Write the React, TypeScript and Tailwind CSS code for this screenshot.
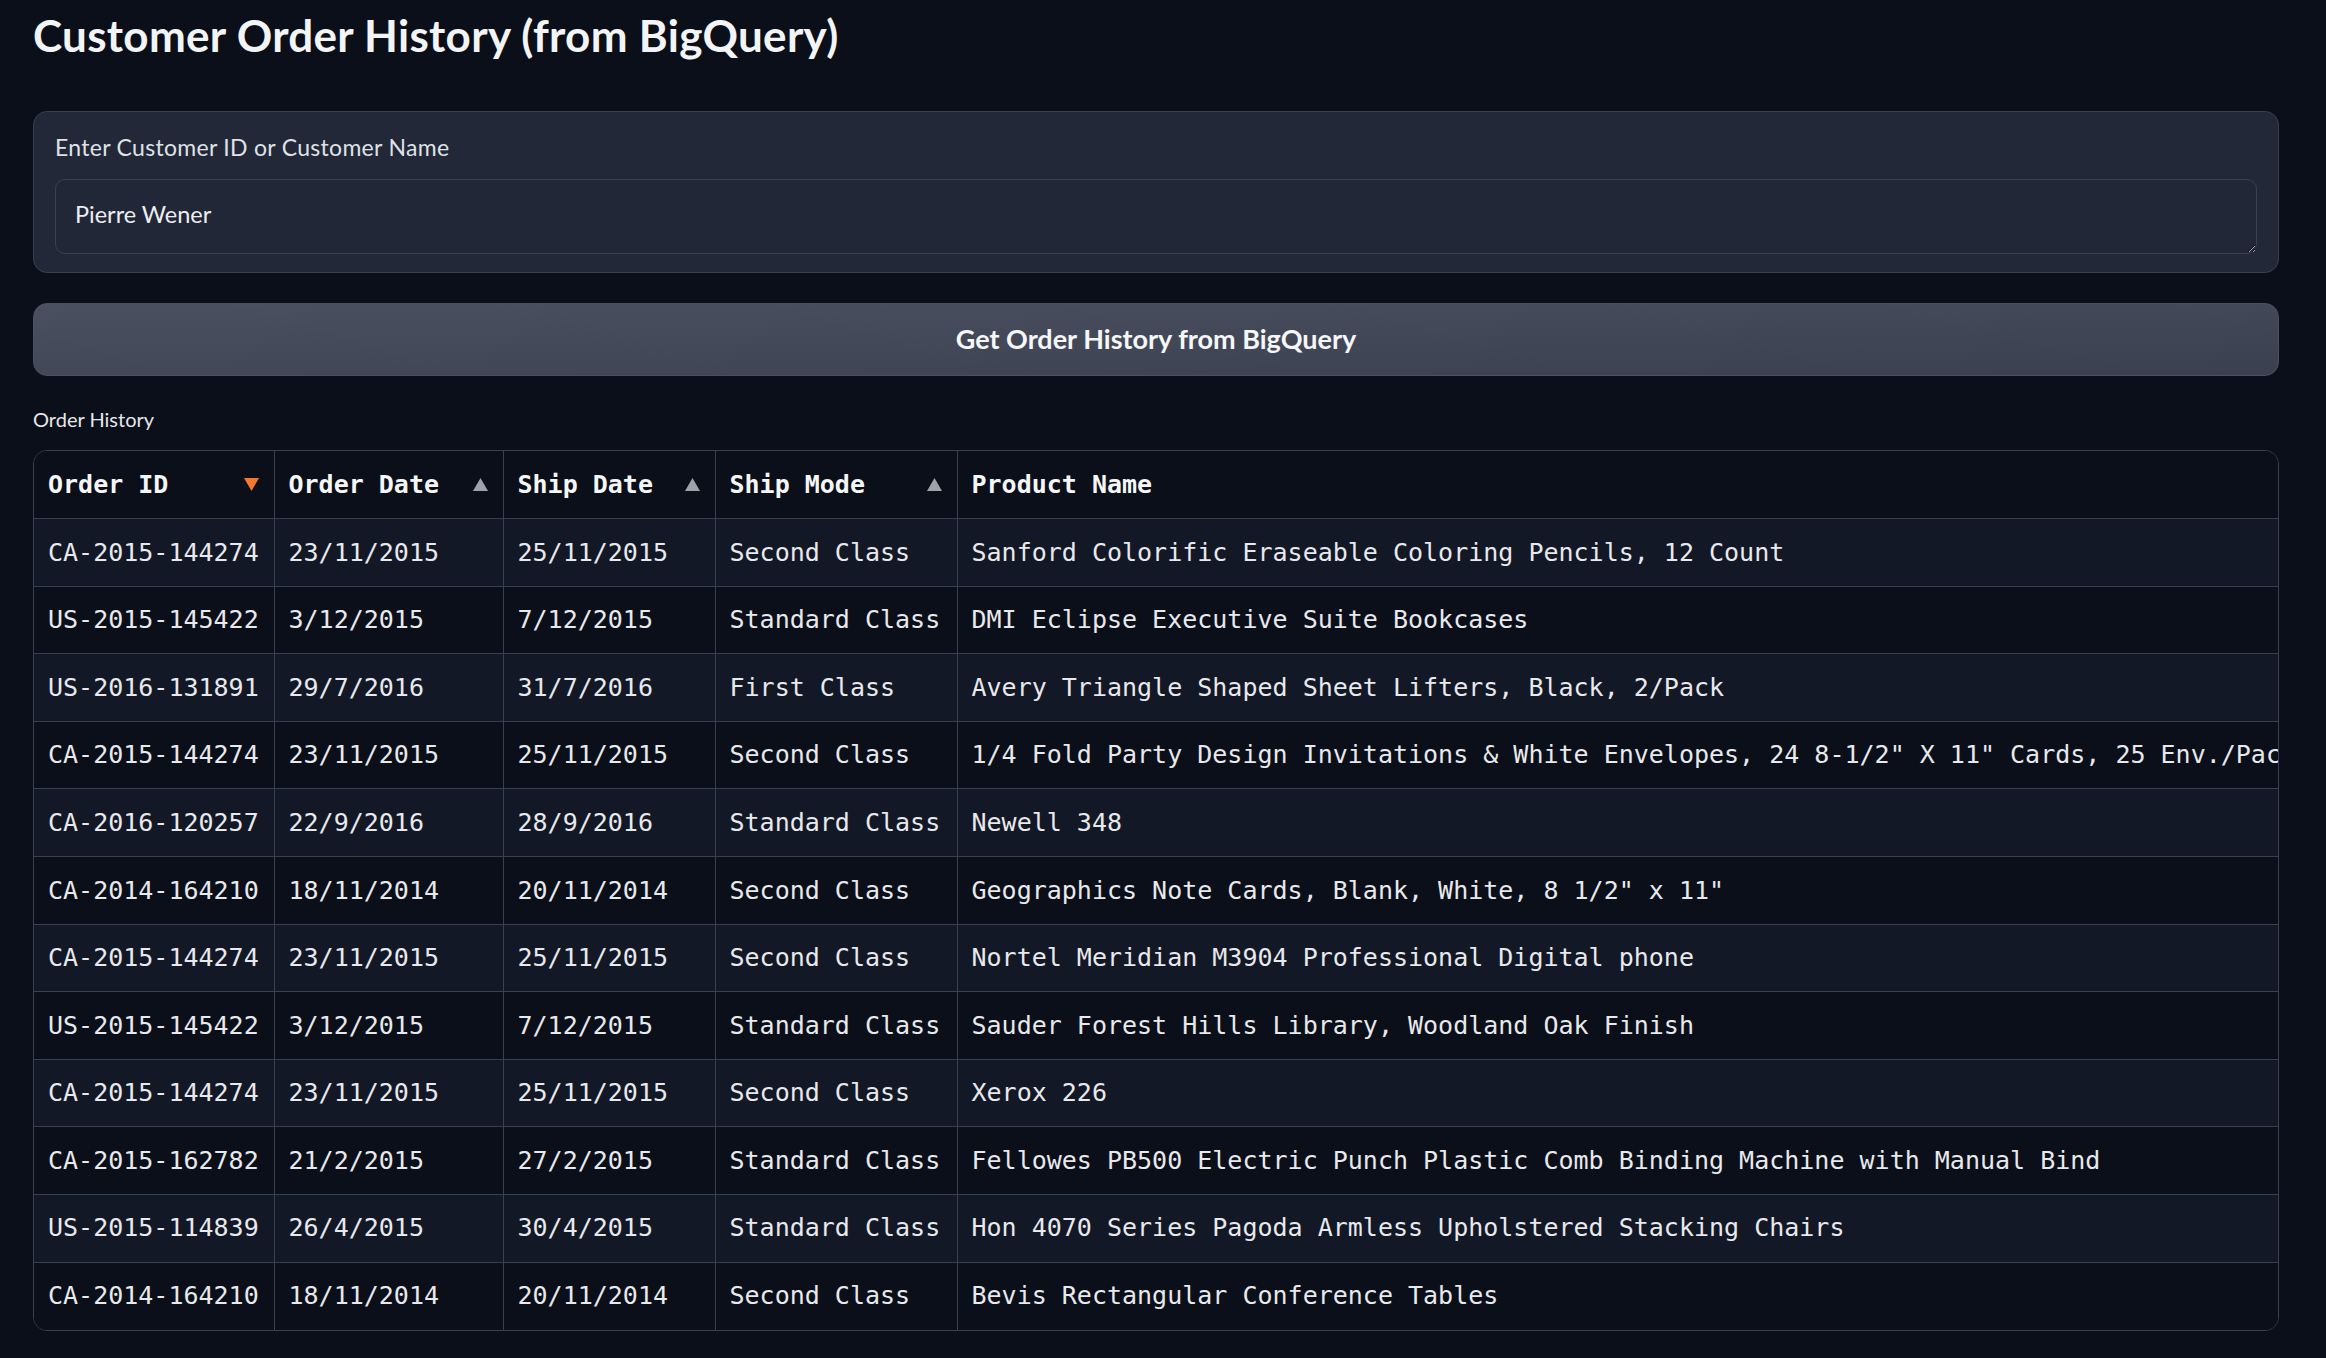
import React from 'react';

const rows = [
  ['CA-2015-144274', '23/11/2015', '25/11/2015', 'Second Class', 'Sanford Colorific Eraseable Coloring Pencils, 12 Count'],
  ['US-2015-145422', '3/12/2015', '7/12/2015', 'Standard Class', 'DMI Eclipse Executive Suite Bookcases'],
  ['US-2016-131891', '29/7/2016', '31/7/2016', 'First Class', 'Avery Triangle Shaped Sheet Lifters, Black, 2/Pack'],
  ['CA-2015-144274', '23/11/2015', '25/11/2015', 'Second Class', '1/4 Fold Party Design Invitations & White Envelopes, 24 8-1/2" X 11" Cards, 25 Env./Pack'],
  ['CA-2016-120257', '22/9/2016', '28/9/2016', 'Standard Class', 'Newell 348'],
  ['CA-2014-164210', '18/11/2014', '20/11/2014', 'Second Class', 'Geographics Note Cards, Blank, White, 8 1/2" x 11"'],
  ['CA-2015-144274', '23/11/2015', '25/11/2015', 'Second Class', 'Nortel Meridian M3904 Professional Digital phone'],
  ['US-2015-145422', '3/12/2015', '7/12/2015', 'Standard Class', 'Sauder Forest Hills Library, Woodland Oak Finish'],
  ['CA-2015-144274', '23/11/2015', '25/11/2015', 'Second Class', 'Xerox 226'],
  ['CA-2015-162782', '21/2/2015', '27/2/2015', 'Standard Class', 'Fellowes PB500 Electric Punch Plastic Comb Binding Machine with Manual Bind'],
  ['US-2015-114839', '26/4/2015', '30/4/2015', 'Standard Class', 'Hon 4070 Series Pagoda Armless Upholstered Stacking Chairs'],
  ['CA-2014-164210', '18/11/2014', '20/11/2014', 'Second Class', 'Bevis Rectangular Conference Tables'],
];

const headers = [
  { label: 'Order ID', sort: 'desc' },
  { label: 'Order Date', sort: 'asc' },
  { label: 'Ship Date', sort: 'asc' },
  { label: 'Ship Mode', sort: 'asc' },
  { label: 'Product Name', sort: null },
];

function SortArrow({ dir }: { dir: string }) {
  if (dir === 'desc') {
    return (
      <svg width="15" height="13" viewBox="0 0 15 13">
        <polygon points="0,0 15,0 7.5,13" fill="#f2782f" />
      </svg>
    );
  }
  return (
    <svg width="15" height="13" viewBox="0 0 15 13">
      <polygon points="7.5,0 15,13 0,13" fill="#9ea2ab" />
    </svg>
  );
}

export default function App() {
  return (
    <div className="w-full min-h-screen bg-[#0b0f19] pl-[33px] pr-[47px] pt-[10px] pb-[30px] font-['Lato',sans-serif]">
      <h1 className="text-[44px] leading-[51px] tracking-[0.3px] font-bold text-[#f3f4f6]">
        Customer Order History (from BigQuery)
      </h1>

      <div className="mt-[50px] rounded-[14px] border border-[#374151] bg-[#222837] pt-[22px] px-[21px] pb-[18px]">
        <label className="block text-[23px] leading-[26px] tracking-[0.3px] text-[#dfe2e7]">
          Enter Customer ID or Customer Name
        </label>
        <textarea
          readOnly
          value="Pierre Wener"
          className="mt-[19px] block w-full h-[75px] rounded-[10px] border border-[#3a4150] bg-[#212736] px-[19px] pt-[20px] pb-[20px] text-[23.5px] leading-[29px] text-[#eceef1] outline-none resize-y [color-scheme:dark] font-['Lato',sans-serif]"
        />
      </div>

      <button className="mt-[30px] w-full h-[73px] rounded-[14px] border border-[#4a5060] bg-gradient-to-br from-[#4a5060] to-[#3b4050] text-[27px] font-bold text-[#f5f6f7]">
        Get Order History from BigQuery
      </button>

      <p className="mt-[31px] text-[20px] leading-[24px] text-[#e5e7eb]">Order History</p>

      <div className="mt-[19px] rounded-[14px] border border-[#374151] overflow-hidden">
        <table className="w-full table-fixed border-collapse font-['DejaVu_Sans_Mono',monospace] text-[25px] text-[#e8e9ec]">
          <colgroup>
            <col className="w-[240px]" />
            <col className="w-[229px]" />
            <col className="w-[212px]" />
            <col className="w-[242px]" />
            <col />
          </colgroup>
          <thead>
            <tr className="h-[67.5px] bg-[#0b0f19]">
              {headers.map((h, i) => (
                <th
                  key={h.label}
                  className={`px-[14px] text-left font-bold text-[#f5f6f7] border-b border-[#374151] ${i < 4 ? 'border-r' : ''}`}
                >
                  <div className="flex items-center justify-between">
                    <span className="whitespace-nowrap">{h.label}</span>
                    {h.sort && (
                      <span className="mr-[1px] flex">
                        <SortArrow dir={h.sort} />
                      </span>
                    )}
                  </div>
                </th>
              ))}
            </tr>
          </thead>
          <tbody>
            {rows.map((r, ri) => (
              <tr key={ri} className={`h-[67.6px] ${ri % 2 === 0 ? 'bg-[#131826]' : 'bg-[#0b0f19]'}`}>
                {r.map((c, ci) => (
                  <td
                    key={ci}
                    className={`px-[14px] whitespace-nowrap overflow-hidden ${ci < 4 ? 'border-r' : 'pr-0'} ${ri < rows.length - 1 ? 'border-b' : ''} border-[#374151]`}
                  >
                    {c}
                  </td>
                ))}
              </tr>
            ))}
          </tbody>
        </table>
      </div>
    </div>
  );
}
